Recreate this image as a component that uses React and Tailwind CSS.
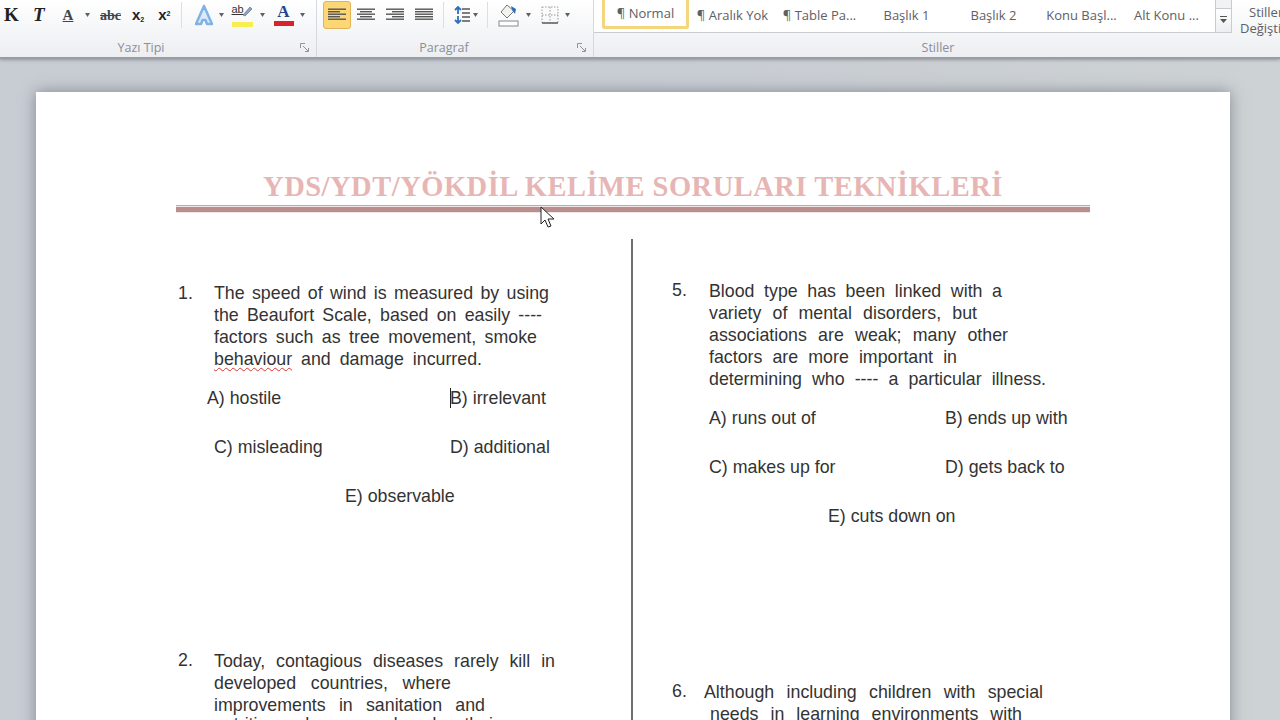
import React from "react";

const sans = "font-['Liberation_Sans',Arial,sans-serif]";

// one justified line of the document
const Line = ({ width = "w-[335px]", children }) => (
  <div className={`${width} h-[22px] leading-[22px] text-justify [text-align-last:justify] whitespace-nowrap`}>
    {children}
  </div>
);

const Caret = () => (
  <svg width="5" height="5" viewBox="0 0 5 5" className="mt-[1px]">
    <path d="M0 0h5L2.500 4z" fill="#5a6270" />
  </svg>
);

const GroupLabel = ({ children, launcher, offset = "" }) => (
  <div className={`relative h-[24px] flex items-center justify-center pt-[6px] text-[12.500px] text-[#8a8f98] font-['Open_Sans',sans-serif] ${offset}`}>
    {children}
    {launcher && (
      <svg width="10" height="10" viewBox="0 0 10 10" className="absolute right-[6px] top-[10px]">
        <path d="M0.500 5V0.500H5M3 3l5 5M8.500 5v3.500H5" fill="none" stroke="#8f949c" />
      </svg>
    )}
  </div>
);

const AlignIcon = ({ lines, active }) => (
  <div className={`w-[28px] h-[28px] flex items-center justify-center rounded-[3px] ${active ? "bg-[#fdd675] border border-[#e3b35a]" : ""}`}>
    <svg width="18" height="14" viewBox="0 0 18 14">
      {lines.map((l, i) => (
        <rect key={i} x={l[0]} y={i * 2.5 + 0.5} width={l[1]} height="1.4" fill="#555" />
      ))}
    </svg>
  </div>
);

const StyleItem = ({ w, children, active }) => (
  <div
    className={`${w} h-[29px] flex items-center justify-center pt-[2px] text-[13px] text-[#5d6066] font-['Open_Sans',sans-serif] whitespace-nowrap ${
      active ? "bg-white border-[3px] border-t-0 border-[#f5d67f] rounded-b-[3px]" : ""
    }`}
  >
    {children}
  </div>
);

const Ribbon = () => (
  <div className="h-[59px] flex bg-gradient-to-b from-white to-[#eceef1] border-b-2 border-[#9a9da3] overflow-hidden shadow-[0_1px_3px_rgba(90,95,105,0.5)] relative">
    {/* Yazı Tipi */}
    <div className="w-[317px] shrink-0 border-r border-[#d5d8dd]">
      <div className="h-[33px] flex items-center pl-[4px] pb-[3px]">
        <span className="w-[14px] font-['Liberation_Serif',serif] font-bold text-[19px] text-[#222]">K</span>
        <span className="ml-[15px] w-[18px] font-['Liberation_Serif',serif] font-bold italic text-[19px] text-[#222]">T</span>
        <span className="ml-[8px] w-[18px] text-center font-['Liberation_Serif',serif] font-bold text-[15px] leading-[15px] text-[#444] underline">A</span>
        <span className="ml-[8px]"><Caret /></span>
        <span className="ml-[10px] text-[#444] font-bold text-[14px] line-through font-['Liberation_Serif',serif]">abc</span>
        <span className="ml-[11px] text-[#222] font-bold text-[15px] font-['Liberation_Sans',sans-serif]">x<sub className="text-[7px]">2</sub></span>
        <span className="ml-[14px] text-[#222] font-bold text-[15px] font-['Liberation_Sans',sans-serif]">x<sup className="text-[7px]">2</sup></span>
        <div className="ml-[10px] w-px h-[26px] bg-[#dcdfe3]" />
        <span className="ml-[10px]">
          <svg width="24" height="24" viewBox="0 0 24 24">
            <path d="M12 3L4 21h5l1.500-4h3l1.500 4h5z" fill="#dbeafb" stroke="#7fb2e5" strokeWidth="2.500" strokeLinejoin="round" />
          </svg>
        </span>
        <span className="ml-[3px]"><Caret /></span>
        <div className="ml-[8px] w-[21px] h-[24px] relative flex flex-col">
          <span className="text-[11px] leading-[12px] text-[#333] underline font-['Liberation_Sans',sans-serif]">ab</span>
          <svg width="12" height="12" viewBox="0 0 12 12" className="absolute right-0 top-[2px]">
            <path d="M2 10L9 2l2 2-7 7z" fill="#8fa3bd" stroke="#5f7391" strokeWidth="0.7" />
          </svg>
          <div className="absolute bottom-0 left-0 w-full h-[5px] bg-[#f8ee4f]" />
        </div>
        <span className="ml-[7px]"><Caret /></span>
        <div className="ml-[9px] w-[20px] h-[24px] flex flex-col items-center">
          <span className="text-[17px] leading-[18px] font-bold text-[#27448f] font-['Liberation_Serif',serif]">A</span>
          <div className="w-full h-[5px] bg-[#d9232b]" />
        </div>
        <span className="ml-[6px]"><Caret /></span>
      </div>
      <GroupLabel launcher offset="pr-[34px]">Yazı Tipi</GroupLabel>
    </div>

    {/* Paragraf */}
    <div className="w-[277px] shrink-0 border-r border-[#d5d8dd]">
      <div className="h-[33px] flex items-center pl-[6px] pb-[3px]">
        <AlignIcon active lines={[[0, 18], [0, 12], [0, 18], [0, 12], [0, 18]]} />
        <div className="ml-px"><AlignIcon lines={[[0, 18], [3, 12], [0, 18], [3, 12], [0, 18]]} /></div>
        <div className="ml-px"><AlignIcon lines={[[0, 18], [6, 12], [0, 18], [6, 12], [0, 18]]} /></div>
        <div className="ml-px"><AlignIcon lines={[[0, 18], [0, 18], [0, 18], [0, 18], [0, 18]]} /></div>
        <div className="ml-[5px] w-px h-[26px] bg-[#dcdfe3]" />
        <svg width="20" height="20" viewBox="0 0 20 20" className="ml-[7px]">
          <path d="M4 5l3-3 3 3M7 3v6M4 15l3 3 3-3M7 11v6" fill="none" stroke="#2c6fc0" strokeWidth="1.800" />
          <path d="M11 4h8M11 8h8M11 12h8M11 16h8" stroke="#555" strokeWidth="1.300" />
        </svg>
        <span className="ml-[2px]"><Caret /></span>
        <div className="ml-[9px] w-px h-[26px] bg-[#dcdfe3]" />
        <svg width="22" height="24" viewBox="0 0 22 24" className="ml-[10px]">
          <path d="M9 2l-6 7 6 6 7-7z" fill="#f3f3ee" stroke="#777" />
          <path d="M13 3l5 3-1 5-3-4z" fill="#2f6fb8" />
          <rect x="1" y="18" width="19" height="5" fill="#fff" stroke="#888" />
        </svg>
        <span className="ml-[6px]"><Caret /></span>
        <svg width="18" height="18" viewBox="0 0 18 18" className="ml-[10px]">
          <path d="M1 1h16v16H1zM9 1v16M1 9h16" fill="none" stroke="#999" strokeDasharray="1.500 1.500" />
          <path d="M1 17h16" stroke="#555" strokeWidth="1.400" />
        </svg>
        <span className="ml-[6px]"><Caret /></span>
      </div>
      <GroupLabel launcher offset="pr-[22px]">Paragraf</GroupLabel>
    </div>

    {/* Stiller */}
    <div className="w-[638px] shrink-0">
      <div className="h-[33px] flex items-start pl-[8px] bg-white border-b border-[#c8cbd0]">
        <StyleItem w="w-[87px]" active>¶ Normal</StyleItem>
        <StyleItem w="w-[87px]">¶ Aralık Yok</StyleItem>
        <StyleItem w="w-[87px]">¶ Table Pa...</StyleItem>
        <StyleItem w="w-[87px]">Başlık 1</StyleItem>
        <StyleItem w="w-[87px]">Başlık 2</StyleItem>
        <StyleItem w="w-[89px]">Konu Başl...</StyleItem>
        <StyleItem w="w-[81px]">Alt Konu ...</StyleItem>
        <div className="w-[17px] h-[32px] ml-auto border-x border-[#c8cbd0] flex flex-col">
          <div className="h-[9px] bg-[#f1f2f4] border-b border-[#c8cbd0]" />
          <div className="flex-1 bg-gradient-to-b from-white to-[#eceef1] flex flex-col items-center pt-[7px]">
            <div className="w-[7px] h-px bg-[#555]" />
            <svg width="7" height="5" viewBox="0 0 7 5" className="mt-[2px]"><path d="M0 0h7L3.500 4z" fill="#555" /></svg>
          </div>
        </div>
      </div>
      <GroupLabel offset="pl-[50px]">Stiller</GroupLabel>
    </div>

    {/* Stilleri Değiştir */}
    <div className="pl-[8px] pt-[4px] text-[13px] leading-[16px] text-[#5d6066] font-['Open_Sans',sans-serif] whitespace-nowrap">
      <div className="pl-[9px]">Stilleri</div>
      <div>Değiştir</div>
    </div>
  </div>
);

const Squiggle = ({ children }) => (
  <span className="underline decoration-wavy decoration-[#d9372f] decoration-1 underline-offset-2">{children}</span>
);

const Page = () => (
  <div className={`relative w-[1194px] h-[700px] mt-[33px] ml-[36px] bg-white shadow-[0_0_14px_rgba(85,90,100,0.6)] text-[17.800px] text-[#333] ${sans}`}>
    {/* Title */}
    <div className="pt-[77px] text-center font-['Liberation_Serif',serif] font-bold text-[28.500px] leading-[36px] tracking-[0.5px] text-[#e7b6b4]">
      YDS/YDT/YÖKDİL KELİME SORULARI TEKNİKLERİ
    </div>
    <div className="ml-[140px] w-[914px] h-[8px] border-t border-[#c9a4a2] bg-[#f1e6e5] pt-[1px]">
      <div className="h-[5px] bg-[#b98f8d]" />
    </div>

    <div className="flex mt-[26px]">
      <div className="w-[597px] h-[500px] pl-[142px] border-r-2 border-[#6f6f6f] shrink-0">
        <div className="flex mt-[43px]">
          <div className="w-[36px] shrink-0 leading-[22px]">1.</div>
          <div>
            <Line>The speed of wind is measured by using</Line>
            <Line width="w-[328px]">the Beaufort Scale, based on easily ----</Line>
            <Line width="w-[323px]">factors such as tree movement, smoke</Line>
            <Line width="w-[268px]"><Squiggle>behaviour</Squiggle> and damage incurred.</Line>
          </div>
        </div>
        <div className="mt-[17px] flex h-[22px] leading-[22px]">
          <span className="ml-[29px] w-[243px]">A) hostile</span>
          <span className="relative"><span className="absolute left-0 top-[1px] w-px h-[20px] bg-[#222]" />B) irrelevant</span>
        </div>
        <div className="mt-[27px] flex h-[22px] leading-[22px]">
          <span className="ml-[36px] w-[236px]">C) misleading</span>
          <span>D) additional</span>
        </div>
        <div className="mt-[27px] h-[22px] leading-[22px] pl-[167px]">E) observable</div>
        <div className="flex mt-[143px]">
          <div className="w-[36px] shrink-0 leading-[22px] -mt-[1px]">2.</div>
          <div>
            <Line width="w-[341px]">Today, contagious diseases rarely kill in</Line>
            <Line width="w-[237px]">developed countries, where</Line>
            <Line width="w-[271px]">improvements in sanitation and</Line>
            <div className="-mt-[3px]"><Line width="w-[285px]">nutrition have reduced their</Line></div>
          </div>
        </div>
      </div>

      <div className="flex-1 pl-[39px]">
        <div className="flex mt-[41px]">
          <div className="w-[37px] shrink-0 leading-[20px]">5.</div>
          <div>
            <Line width="w-[293px]">Blood type has been linked with a</Line>
            <Line width="w-[268px]">variety of mental disorders, but</Line>
            <Line width="w-[299px]">associations are weak; many other</Line>
            <Line width="w-[248px]">factors are more important in</Line>
            <Line width="w-[337px]">determining who ---- a particular illness.</Line>
          </div>
        </div>
        <div className="mt-[17px] flex h-[22px] leading-[22px]">
          <span className="ml-[37px] w-[236px]">A) runs out of</span>
          <span>B) ends up with</span>
        </div>
        <div className="mt-[27px] flex h-[22px] leading-[22px]">
          <span className="ml-[37px] w-[236px]">C) makes up for</span>
          <span>D) gets back to</span>
        </div>
        <div className="mt-[27px] h-[22px] leading-[22px] pl-[156px]">E) cuts down on</div>
        <div className="flex mt-[154px]">
          <div className="w-[32px] shrink-0 leading-[20px]">6.</div>
          <div>
            <Line width="w-[339px]">Although including children with special</Line>
            <div className="pl-[6px]"><Line width="w-[312px]">needs in learning environments with</Line></div>
          </div>
        </div>
      </div>
    </div>

    {/* mouse pointer */}
    <svg width="16" height="24" viewBox="0 0 16 24" className="absolute left-[504px] top-[114px]">
      <path d="M1 1v17l4-4 3 7 3-1-3-7h6z" fill="#fff" stroke="#222" strokeWidth="1" />
    </svg>
  </div>
);

export default function App() {
  return (
    <div className="w-[1280px] h-[720px] overflow-hidden bg-gradient-to-r from-[#c8ccd3] via-[#c8ccd3] to-[#cdd2d4]">
      <Ribbon />
      <Page />
    </div>
  );
}
